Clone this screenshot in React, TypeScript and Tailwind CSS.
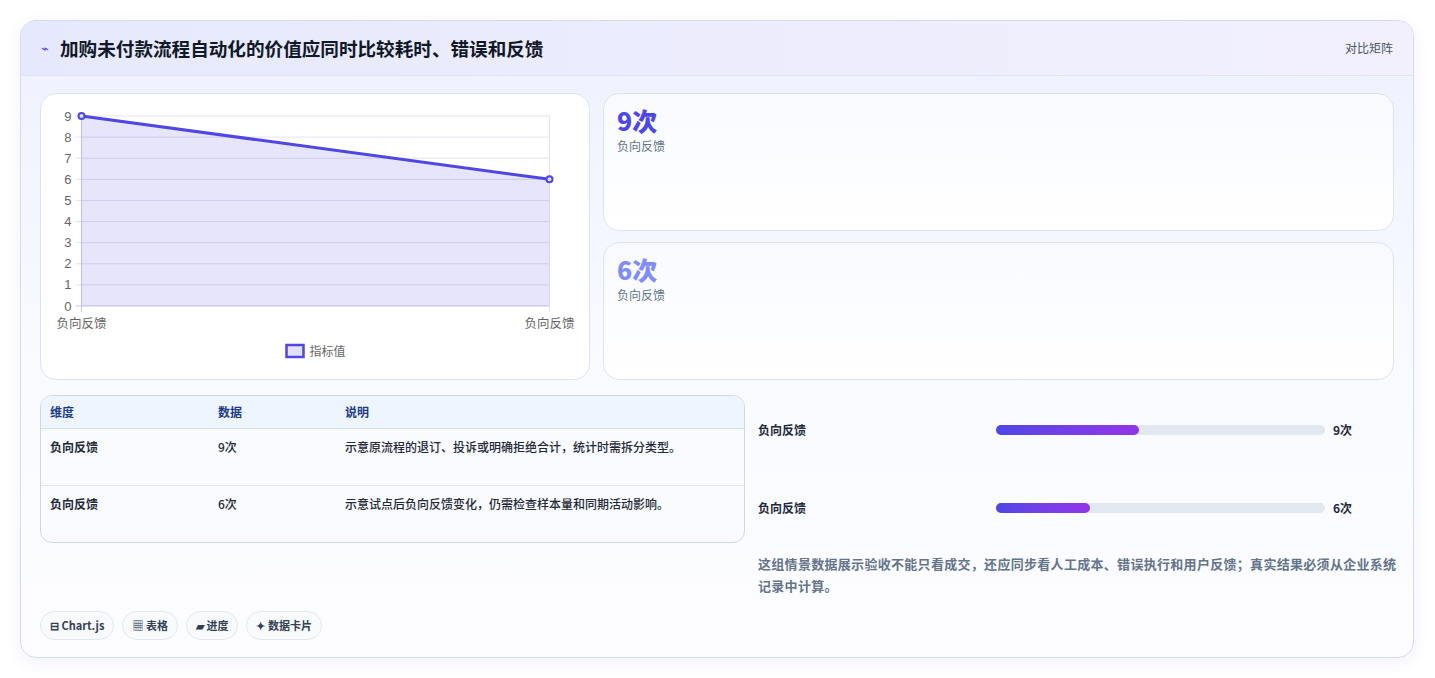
import React from 'react';

const font = { fontFamily: '"Noto Sans CJK SC", "Liberation Sans", sans-serif' };

function LineChart() {
  const x0 = 40, x1 = 508, y0 = 212, step = 190 / 9;
  const ticks = [0, 1, 2, 3, 4, 5, 6, 7, 8, 9];
  const yOf = (v: number) => y0 - v * step;
  return (
    <svg viewBox="0 0 547 284" className="block h-[284px] w-full" style={{ fontFamily: '"Liberation Sans", "Noto Sans CJK SC", sans-serif' }}>
      {ticks.map((t) => (
        <g key={t}>
          <line x1={x0 - 6} x2={x1} y1={yOf(t)} y2={yOf(t)} stroke={t === 0 ? '#c7c9e0' : '#e3e3ef'} />
          <text x={30} y={yOf(t) + 4.5} textAnchor="end" fontSize="13" fill="#666">{t}</text>
        </g>
      ))}
      <line x1={x0} x2={x0} y1={y0 - 190} y2={y0 + 6} stroke="#c7c9e0" />
      <line x1={x1} x2={x1} y1={y0 - 190} y2={y0 + 6} stroke="#e3e3ef" />
      <polygon points={`${x0},${yOf(9)} ${x1},${yOf(6)} ${x1},${y0} ${x0},${y0}`} fill="rgba(79,70,229,0.14)" />
      <line x1={x0} y1={yOf(9)} x2={x1} y2={yOf(6)} stroke="#4f46e5" strokeWidth="3" />
      <circle cx={x0} cy={yOf(9)} r="3" fill="#e0defa" stroke="#4f46e5" strokeWidth="2" />
      <circle cx={x1} cy={yOf(6)} r="3" fill="#e0defa" stroke="#4f46e5" strokeWidth="2" />
      <text x={x0} y={234} textAnchor="middle" fontSize="12.5" fill="#666" style={font}>负向反馈</text>
      <text x={x1} y={234} textAnchor="middle" fontSize="12.5" fill="#666" style={font}>负向反馈</text>
      <rect x={245} y={251} width={17} height={12} fill="#e3e1fa" stroke="#4f46e5" strokeWidth="2.5" />
      <text x={268} y={261.5} fontSize="12" fill="#666" style={font}>指标值</text>
    </svg>
  );
}

function StatCard({ value, color }: { value: string; color: string }) {
  return (
    <div className="h-[138px] rounded-2xl border border-[#dde3f5] bg-gradient-to-b from-[#f8faff] to-white px-[13px] py-[10px]">
      <div className={`text-[25px] font-extrabold leading-[32px] ${color}`}>{value}</div>
      <div className="mt-[2px] text-xs text-[#64748b]">负向反馈</div>
    </div>
  );
}

function Bar({ value, pct }: { value: string; pct: string }) {
  return (
    <div className="flex items-center text-xs font-bold text-[#1e293b]">
      <div className="w-[238px]">负向反馈</div>
      <div className="h-[10px] w-[329px] rounded-full bg-[#e2e8f0]">
        <div className="h-full rounded-full bg-gradient-to-r from-[#4f46e5] to-[#9333ea]" style={{ width: pct }} />
      </div>
      <div className="ml-2">{value}</div>
    </div>
  );
}

export default function App() {
  const rows = [
    ['9次', '示意原流程的退订、投诉或明确拒绝合计，统计时需拆分类型。'],
    ['6次', '示意试点后负向反馈变化，仍需检查样本量和同期活动影响。'],
  ];
  return (
    <div className="min-h-[678px] bg-white pl-5 pr-[21px] pt-5" style={font}>
      <div className="h-[638px] overflow-hidden rounded-2xl border border-[#d6daf3] bg-gradient-to-b from-[#eef1ff] via-[#f8faff] to-[#fdfdff] shadow-[0_4px_16px_rgba(79,70,229,0.08)]">
        <div className="flex h-[55px] items-center justify-between border-b border-[#dfe3f5] bg-gradient-to-r from-[#e6e9fd] to-[#f2f0fd] pl-[20px] pr-5">
          <div className="flex items-center gap-[11px]">
            <span className="text-[13px] text-[#4f46e5]">⌁</span>
            <h1 className="text-[18.6px] font-bold text-[#111827]">加购未付款流程自动化的价值应同时比较耗时、错误和反馈</h1>
          </div>
          <span className="text-xs text-[#4b5563]">对比矩阵</span>
        </div>
        <div className="px-[19px] pt-[17px]">
          <div className="flex gap-[13px]">
            <div className="w-[550px] shrink-0 rounded-2xl border border-[#dde3f5] bg-white">
              <LineChart />
            </div>
            <div className="flex flex-1 flex-col gap-[11px]">
              <StatCard value="9次" color="text-[#4f46e5]" />
              <StatCard value="6次" color="text-[#818cf8]" />
            </div>
          </div>
          <div className="mt-[15px] flex gap-[13px]">
            <div className="h-[148px] w-[705px] shrink-0 overflow-hidden rounded-xl border border-[#cfd8ea] bg-[#f9fbff] text-xs">
              <div className="flex h-[33px] items-center border-b border-[#d6e0f0] bg-[#eef5ff] font-bold text-[#1e3a8a]">
                <div className="w-[177px] pl-[9px]">维度</div>
                <div className="w-[127px]">数据</div>
                <div>说明</div>
              </div>
              {rows.map(([v, d], i) => (
                <div key={i} className={`flex h-[57px] pt-[10px] font-bold text-[#1f2937] ${i === 0 ? 'border-b border-[#dfe6f2]' : ''}`}>
                  <div className="w-[177px] pl-[9px]">负向反馈</div>
                  <div className="w-[127px] font-medium">{v}</div>
                  <div className="font-medium">{d}</div>
                </div>
              ))}
            </div>
            <div className="flex-1 pt-[27px]">
              <div className="flex flex-col gap-[62px]">
                <Bar value="9次" pct="43.5%" />
                <Bar value="6次" pct="28.5%" />
              </div>
              <p className="-mr-3 mt-[37px] text-[13px] font-bold leading-[22px] tracking-[0.3px] text-[#64748b]">
                这组情景数据展示验收不能只看成交，还应同步看人工成本、错误执行和用户反馈；真实结果必须从企业系统记录中计算。
              </p>
            </div>
          </div>
          <div className="mt-[14px] flex gap-2 text-[11px] font-bold text-[#334155]">
            <span className="rounded-full border border-[#e2e8f0] bg-[#f8fafc] px-[9px] py-[5px]">⊟ Chart.js</span>
            <span className="rounded-full border border-[#e2e8f0] bg-[#f8fafc] px-[9px] py-[5px]">▦ 表格</span>
            <span className="rounded-full border border-[#e2e8f0] bg-[#f8fafc] px-[9px] py-[5px]">▰ 进度</span>
            <span className="rounded-full border border-[#e2e8f0] bg-[#f8fafc] px-[9px] py-[5px]">✦ 数据卡片</span>
          </div>
        </div>
      </div>
    </div>
  );
}
